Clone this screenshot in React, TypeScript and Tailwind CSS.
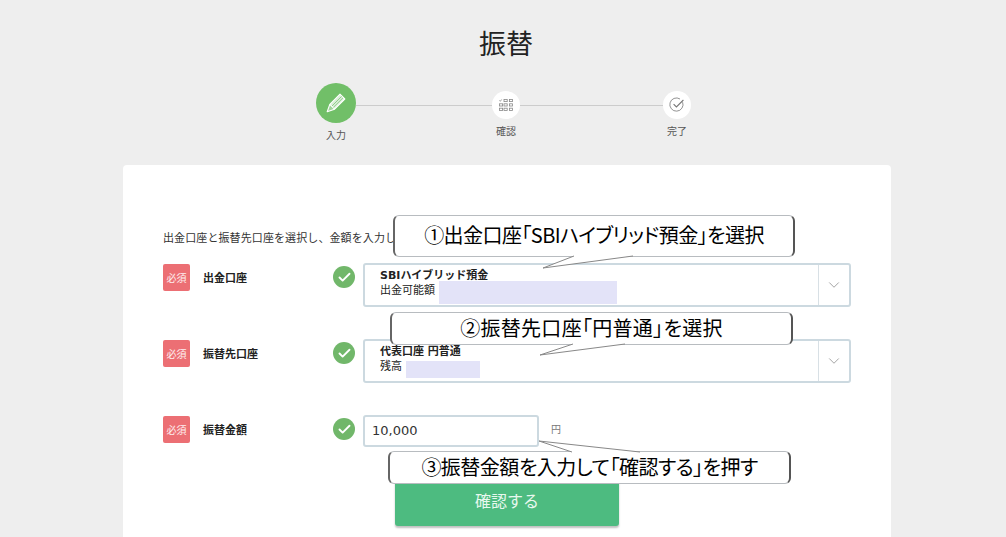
import React from 'react';
import { Check, ChevronDown } from 'lucide-react';

const jp = 'font-["DejaVu_Sans","Noto_Sans_CJK_JP",sans-serif]';

const PencilIcon = () => (
    <svg width="20" height="20" viewBox="0 0 20 20" fill="none" stroke="#fff" strokeWidth="1.1" strokeLinejoin="round">
        <path d="M14 1.2l4.8 4.8L8.6 16.2 3.8 11.4z" fill="#fff" fillOpacity="0.75" />
        <path d="M3.8 11.4L1.2 18.8l7.4-2.6" fill="#fff" fillOpacity="0.35" />
        <path d="M15.6 3.4L6 13M17 4.8L7.4 14.4" stroke="#71bf68" strokeWidth="0.7" />
    </svg>
);

const GridIcon = () => (
    <svg width="14" height="12" viewBox="0 0 14 12" fill="none" stroke="#888" strokeWidth="0.8">
        <path d="M0.4 1.4l0.9 0.9 1.3-1.8" />
        {[5, 10.4].map((x) => <rect key={x} x={x} y="0.4" width="3.2" height="2.2" />)}
        {[0.4, 5, 10.4].map((x) => <rect key={x} x={x} y="4.8" width="3.2" height="2.2" />)}
        {[0.4, 5, 10.4].map((x) => <rect key={x} x={x} y="9.2" width="3.2" height="2.2" />)}
    </svg>
);

const DoneIcon = () => (
    <svg width="16" height="16" viewBox="0 0 16 16" fill="none" stroke="#777" strokeWidth="0.8">
        <path d="M13.6 5.2A6.6 6.6 0 1 1 11 2" />
        <path d="M4.6 7.2l2.8 2.8 7-7" strokeWidth="1.1" />
    </svg>
);

const Required = () => (
    <div className="w-[27px] h-[27px] mt-px bg-[#ec6f74] rounded-[2px] flex items-center justify-center text-white/90 text-[10px] font-['Noto_Sans_CJK_JP',sans-serif] shrink-0">
        必須
    </div>
);

const OkMark = () => (
    <div className="w-[22px] h-[22px] mt-[3px] rounded-full bg-[#71b76a] flex items-center justify-center shrink-0">
        <Check size={15} strokeWidth={3} className="text-white" />
    </div>
);

const Row = ({ label, children }: { label: string; children: React.ReactNode }) => (
    <div className="flex items-start h-[44px]">
        <Required />
        <div className="w-[143px] h-[27px] mt-px pl-[13px] flex items-center text-[11px] font-bold text-[#222] font-['Noto_Sans_CJK_JP',sans-serif] shrink-0">{label}</div>
        <OkMark />
        <div className="ml-[8px] flex-1">{children}</div>
    </div>
);

const AccountSelect = ({ name, sub, maskClass, maskW }: { name: string; sub: string; maskClass: string; maskW: number }) => (
    <div className="h-[44px] w-[488px] bg-white border-2 border-[#ccd9e0] rounded-[3px] flex">
        <div className={`flex-1 pl-[15px] pt-[3px] text-[11px] leading-[15px] text-[#222] ${jp}`}>
            <div className="font-bold">{name}</div>
            <div className="flex">
                <span>{sub}</span>
                <span className={`ml-[4px] bg-[#e3e3f8] ${maskClass}`} style={{ width: maskW }} />
            </div>
        </div>
        <div className="w-[31px] border-l border-[#d8e0e5] flex items-center justify-center">
            <ChevronDown size={18} strokeWidth={0.9} className="text-[#777]" />
        </div>
    </div>
);

const Callout = ({ text, box, tail }: { text: React.ReactNode; box: string; tail: React.ReactNode }) => (
    <>
        <div className={`absolute ${box} bg-white border-y border-y-[#b8bcc0] border-r-2 border-r-[#555] border-l-2 border-l-[#666] rounded-[6px] flex items-center justify-center text-[20px] text-black font-['Noto_Sans_CJK_JP',sans-serif] [font-feature-settings:"palt"] whitespace-nowrap`}>
            {text}
        </div>
        {tail}
    </>
);

const Tail = ({ points }: { points: string }) => (
    <svg className="absolute left-0 top-0 pointer-events-none" width="1006" height="537">
        <polyline points={points} fill="white" stroke="#888" strokeWidth="1" />
    </svg>
);

export default function App() {
    return (
        <div className="relative h-[537px] overflow-hidden bg-[#eeeeee]">
            <h1 className="pt-[26px] pl-[6px] text-center text-[27px] leading-[34px] text-[#222] font-['Noto_Sans_CJK_JP',sans-serif] font-normal">振替</h1>

            {/* STEPPER */}
            <div className="mt-[23px] ml-[316px] h-[82px] flex items-start font-['Noto_Sans_CJK_JP',sans-serif] text-[10px] text-[#555]">
                <div className="w-10 flex flex-col items-center shrink-0">
                    <div className="w-10 h-10 rounded-full bg-[#71bf68] flex items-center justify-center">
                        <PencilIcon />
                    </div>
                    <span className="mt-[5px] leading-[14px] whitespace-nowrap">入力</span>
                </div>
                <div className="w-[136px] h-px bg-[#cccccc] mt-[22px]" />
                <div className="w-7 mt-2 flex flex-col items-center shrink-0">
                    <div className="w-7 h-7 rounded-full bg-white flex items-center justify-center"><GridIcon /></div>
                    <span className="mt-[5px] leading-[14px] whitespace-nowrap">確認</span>
                </div>
                <div className="w-[143px] h-px bg-[#cccccc] mt-[22px]" />
                <div className="w-7 mt-2 flex flex-col items-center shrink-0">
                    <div className="w-7 h-7 rounded-full bg-white flex items-center justify-center">
                        <DoneIcon />
                    </div>
                    <span className="mt-[5px] leading-[14px] whitespace-nowrap">完了</span>
                </div>
            </div>

            {/* CARD */}
            <div className="ml-[123px] w-[768px] h-[500px] bg-white rounded-[4px] pl-10 pt-[64px]">
                <p className="text-[11px] leading-[16px] text-[#333] font-['Noto_Sans_CJK_JP',sans-serif] tracking-[0.1px]">
                    出金口座と振替先口座を選択し、金額を入力してください。
                </p>
                <div className="mt-[18px] flex flex-col gap-[32px]">
                    <Row label="出金口座">
                        <AccountSelect name="SBIハイブリッド預金" sub="出金可能額" maskClass="h-[23px] -mt-[2px]" maskW={178} />
                    </Row>
                    <Row label="振替先口座">
                        <AccountSelect name="代表口座 円普通" sub="残高" maskClass="h-[17px] mt-[2px]" maskW={74} />
                    </Row>
                    <Row label="振替金額">
                        <div className="flex items-start h-[32px]">
                            <div className={`w-[176px] h-[32px] border-2 border-[#ccd9e0] rounded-[3px] pl-[7px] flex items-center text-[13px] text-[#333] ${jp}`}>10,000</div>
                            <span className="ml-[12px] mt-[7px] leading-[14px] text-[10px] text-[#777] font-['Noto_Sans_CJK_JP',sans-serif]">円</span>
                        </div>
                    </Row>
                </div>
                <div className="mt-[11px] ml-[232px] w-[224px] h-[56px] bg-[#4dbb80] rounded-[3px] shadow-[0_2px_2px_rgba(0,0,0,0.25)] flex items-center justify-center text-[16px] text-[#e8f8ef] font-['Noto_Sans_CJK_JP',sans-serif]">
                    <span className="pt-[4px]">確認する</span>
                </div>
            </div>

            {/* ANNOTATIONS */}
            <Callout
                text={<span className="pb-[3px] tracking-[-0.55px]">①出金口座「SBIハイブリッド預金」を選択</span>}
                box="left-[393px] top-[215px] w-[402px] h-[42px]"
                tail={<Tail points="574,256 543,268 633,256" />}
            />
            <Callout
                text={<span className="pb-[2px] tracking-[0.3px]">②振替先口座「円普通」を選択</span>}
                box="left-[390px] top-[312px] w-[403px] h-[33px]"
                tail={<Tail points="573,344 540,355 625,344" />}
            />
            <Callout
                text={<span className="pb-[2px] tracking-[-0.5px]">③振替金額を入力して「確認する」を押す</span>}
                box="left-[388px] top-[451px] w-[403px] h-[33px]"
                tail={<Tail points="572,452 539,441 640,452" />}
            />
        </div>
    );
}
